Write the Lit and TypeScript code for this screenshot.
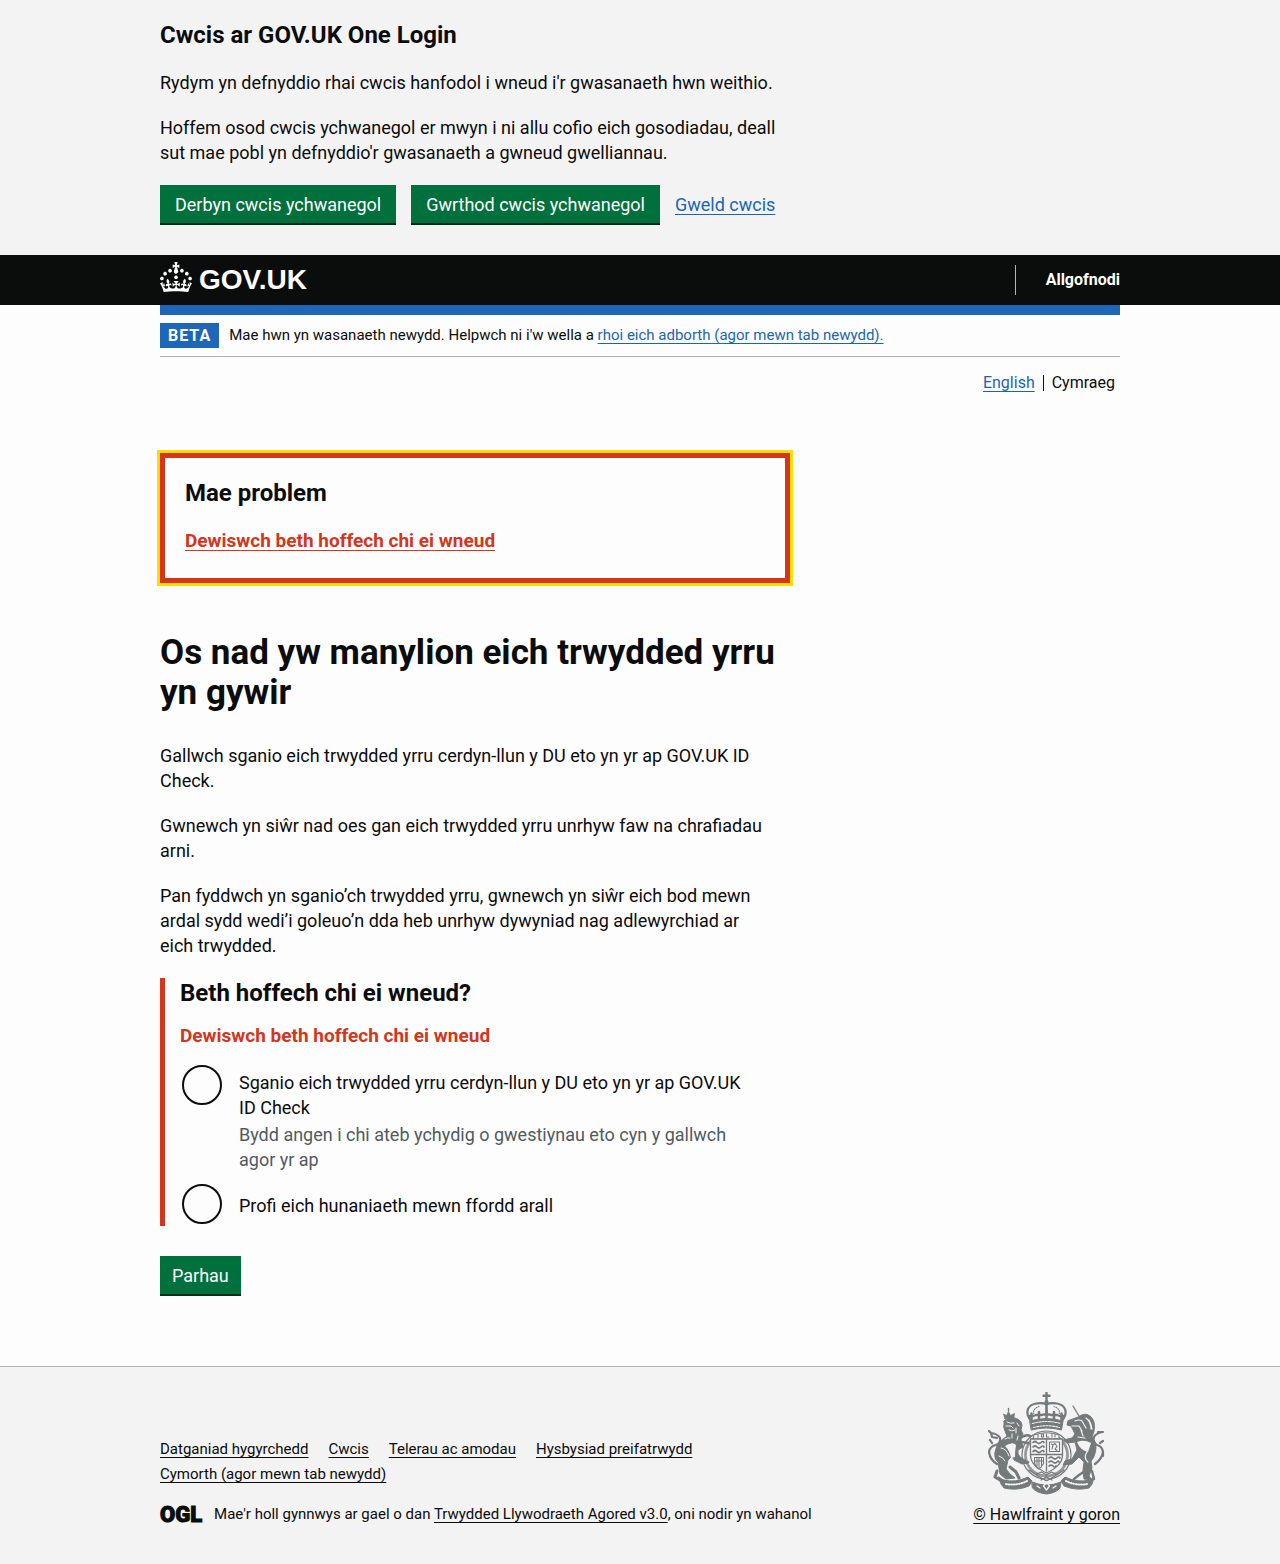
import { LitElement, html, css, svg } from "lit";
import { customElement, state } from "lit/decorators.js";

const crown = svg`<path fill="currentColor" d="M22.6 10.4c-1 .4-2-.1-2.4-1-.4-.9.1-2 1-2.4.9-.4 2 .1 2.4 1s-.1 2-1 2.4m-5.9 6.7c-.9.4-2-.1-2.4-1-.4-.9.1-2 1-2.4.9-.4 2 .1 2.4 1s-.1 2-1 2.4m10.8-3.7c-1 .4-2-.1-2.4-1-.4-.9.1-2 1-2.4.9-.4 2 .1 2.4 1s0 2-1 2.4m3.3 4.8c-1 .4-2-.1-2.4-1-.4-.9.1-2 1-2.4.9-.4 2 .1 2.4 1s-.1 2-1 2.4M17 4.7l2.3 1.2V2.5l-2.3.7-.2-.2.9-3h-3.4l.9 3-.2.2c-.1.1-2.3-.7-2.3-.7v3.4L15 4.7c.1.1.1.2.2.2l-1.3 4c-.1.2-.1.4-.1.6 0 1.1.8 2 1.9 2.2h.7c1-.2 1.9-1.1 1.9-2.1 0-.2 0-.4-.1-.6l-1.3-4c-.1-.2 0-.2.1-.3m-7.6 5.7c.9.4 2-.1 2.4-1 .4-.9-.1-2-1-2.4-.9-.4-2 .1-2.4 1s0 2 1 2.4m-5 3c.9.4 2-.1 2.4-1 .4-.9-.1-2-1-2.4-.9-.4-2 .1-2.4 1s.1 2 1 2.4m-3.2 4.8c.9.4 2-.1 2.4-1 .4-.9-.1-2-1-2.4-.9-.4-2 .1-2.4 1s0 2 1 2.4m14.8 11c4.4 0 8.6.3 12.3.8 1.1-4.5 2.4-7 3.7-8.8l-2.5-.9c.2 1.3.3 1.9 0 2.7-.4-.4-.8-1.1-1.1-2.3l-1.2 4c.7-.5 1.3-.8 2-.9-1.1 2.5-2.6 3.1-3.5 3-1.1-.2-1.7-1.2-1.5-2.1.3-1.2 1.5-1.5 2.1-.1 1.1-2.3-.8-3-2-2.3 1.9-1.9 2.1-3.5.6-5.6-2.1 1.6-2.1 3.2-1.2 5.5-1.2-1.4-3.2-.6-2.5 1.6.9-1.4 2.1-.5 1.9.8-.2 1.1-1.7 2.1-3.5 1.9-2.7-.2-2.9-2.1-2.9-3.6.7-.1 1.9.5 2.9 1.9l.4-4.3c-1.1 1.1-2.1 1.4-3.2 1.4.4-1.2 2.1-3 2.1-3h-5.4s1.7 1.9 2.1 3c-1.1 0-2.1-.2-3.2-1.4l.4 4.3c1-1.4 2.2-2 2.9-1.9-.1 1.5-.2 3.4-2.9 3.6-1.9.2-3.4-.8-3.5-1.9-.2-1.3 1-2.2 1.9-.8.7-2.3-1.2-3-2.5-1.6.9-2.2.9-3.9-1.2-5.5-1.5 2-1.3 3.7.6 5.6-1.2-.7-3.1 0-2 2.3.6-1.4 1.8-1.1 2.1.1.2.9-.3 1.9-1.5 2.1-.9.2-2.4-.5-3.5-3 .6 0 1.2.3 2 .9l-1.2-4c-.3 1.1-.7 1.9-1.1 2.3-.3-.8-.2-1.4 0-2.7l-2.9.9C1.3 23 2.6 25.5 3.7 30c3.7-.5 7.9-.8 12.3-.8"/>`;

const crest = svg`
  <g fill="none" stroke="#747a7a" stroke-linecap="round" stroke-linejoin="round">
    <!-- imperial crown -->
    <path d="M58.500 .8v8M55.500 3.800h6" stroke-width="2.400"/>
    <circle cx="58.500" cy="10" r="2" fill="#747a7a" stroke="none"/>
    <path d="M43 29C36 20 40 13 48 11.500q7-1 10.500 1 3.500-2 10.500-1c8 1.500 12 8.500 5 17.500" stroke-width="2.200"/>
    <path d="M47 24c-3-4-1-8 4-9.500M70 24c3-4 1-8-4-9.500" stroke-width="1.100" stroke-dasharray="1 1.400"/>
    <path d="M58.500 13v8" stroke-width="2.600"/>
    <path d="M42 29q16.500-5 33 0l-1.500 9q-15-4-30 0z" fill="#747a7a" stroke-width="1"/>
    <path d="M43.500 21.500v7M41.500 24h4M51 20v8M48 23h6M58.500 19v9M55.500 22.500h6M66 20v8M63 23h6M73.500 21.500v7M71.500 24h4" stroke-width="2.500"/>
    <path d="M44.500 31.500q14-4 28 0M45.500 35.500q13-3.500 26 0" stroke="#f3f3f3" stroke-width="1.100" stroke-dasharray="2 1.200"/>
    <!-- garter and quartered shield -->
    <ellipse cx="58.500" cy="63" rx="24.500" ry="24" stroke-width="1.200"/>
    <ellipse cx="58.500" cy="63" rx="21" ry="21" stroke-width="2.800" stroke-dasharray="1.500 1.300" opacity=".75"/>
    <path d="M46 43q12.500-4.500 25 0v4H46z" fill="#f3f3f3" stroke-width="1"/>
    <path d="M50 42.500v3M53.500 42v3h2v-3zM58.500 42v3h2.500M64 41.500v3.500M67 42.500v2.500" stroke-width="1.100"/>
    <path d="M42.500 47h32v16c0 9-8 14-16 18-8-4-16-9-16-18z" fill="#f3f3f3" stroke-width="1.300"/>
    <path d="M58.500 47v32M42.500 62.500h32" stroke-width="1.300"/>
    <path d="M45 50.500q2-2 4 0t4 0 3 0M45 55q2-2 4 0t4 0 3 0M45 59.500q2-2 4 0t4 0 3 0" stroke-width="1.700"/>
    <path d="M61.500 50h10v9.500h-10zM64 57l1-4 2-1.500 2 3-2 2.500 2 1.500M65 53l-1.500-1" stroke-width="1.100"/>
    <path d="M46.500 65.500h9v6q-2.500 4.500-5 5.500-4-3-4-8zM49 66v8M51 66v9M53.500 66v7M47 69h8" stroke-width="1.100"/>
    <path d="M61 66q2-2 4 0t4 0 3 0M61 70q2-2 4 0t4 0 2 0M61 74q2-2 4 0t3 0" stroke-width="1.700"/>
    <path d="M41 78l9 6 8.500 5 8.500-5 9-6M49 82l4.500-2 5 3 5-3 4.500 2M53 88l5.500-3 5.500 3" stroke-width="1.300"/>
    <!-- lion -->
    <path d="M17 26.500l-1.500-4.500 3 1.500 2-4 2 4 4-2-1 6q-4-2-8.500-1z" fill="#747a7a" stroke-width=".8"/>
    <path d="M20.500 16.500v2.500" stroke-width="1.400"/>
    <path d="M16 29q4-4 11-3 6 2 7 7l-1 5 2 4-2 6 2 7-5 3q-1 4 2 7l5 3 3 3-6 1-8-4-2-4-4 4-2 9 4 5 5 4-9 1-6-5-2-12q-4-3-3-10 1-7 7-12l5-4-2-5q-2-4-1-7z" fill="#747a7a" stroke-width="1"/>
    <path d="M19 30q3 2 7 1M18 34h5l2 2M21 38q3 2 6 0M29 31l2 3M28 36v5M24 42v4M30 44l-1 4M17 47q3-2 5-1M13 56q5 0 8 8M11 64q4 1 6 5" stroke="#f3f3f3" stroke-width="1"/>
    <path d="M17 54q8-5 11-1-1 5-1 12l-4 1q-1-7-6-12z" fill="#f3f3f3" stroke="none"/>
    <path d="M34 45q5-3 8-1M33 50l7 1M31 67q5 5 9 3" stroke-width="2.600"/>
    <path d="M9 72q-7-4-8-12 1-6 7-7 5-2 4-7-2-4-9-5M3 41l-2-2M3 41l1 4 5 1M4 51l-2-3M1 60l1 4" stroke-width="2.200"/>
    <path d="M9 79l-2 6 5 3 6 2M22 75l6 5 3 6" stroke-width="3"/>
    <!-- unicorn -->
    <path d="M91 24L85 14" stroke-width="1.300"/>
    <path d="M90 25q7-5 12-1 6 5 4 15l-2 6q4 4 4 11-1 9-5 13l1 7-3 8 3 4-8-1-1-9 1-8-5-5-7 7-9 1 2-4 7-2 5-9-2-8-8 1-4-3 9-2 3-4-4-8-4-1 1-4z" fill="#747a7a" stroke-width="1"/>
    <path d="M87 29q4-2 7 0l4 7M84 34l7 0 3 5M98 26q5 4 5 11M101 28q2 3 3 9M93 38l2 6M99 60q-4 6 1 10M90 45l7 1" stroke="#f3f3f3" stroke-width="1.200"/>
    <path d="M89 50q7-3 14 1l-3 9q-8-2-11-10z" fill="#f3f3f3" stroke="none"/>
    <path d="M107 72q7-5 8-12-1-6-6-7-5-3-3-8 2-4 9-5M115 40l-5 0M112 51l3-2M115 60l0 4" stroke-width="2.200"/>
    <path d="M97 79l-6 4-5 4M104 79l2 8" stroke-width="2.400"/>
    <!-- motto ribbon -->
    <path d="M11 85l4 3q13 3 25-3l4 4-3 5q-12 5-25 2l-3-4z" fill="#747a7a" stroke-width="1"/>
    <path d="M106 85l-4 3q-13 3-25-3l-4 4 3 5q12 5 25 2l3-4z" fill="#747a7a" stroke-width="1"/>
    <path d="M18 92q11 2 21-3M99 92q-11 2-21-3" stroke="#f3f3f3" stroke-width="2" stroke-dasharray=".8 1.800"/>
    <path d="M44 90q14 6 29 0l-1 6q-4 5-13.500 6-10-1-14-6z" fill="#747a7a" stroke-width="1"/>
    <path d="M58.500 90l3 4-3 4-3-4zM49 94l3 2M68 94l-3 2" stroke="#f3f3f3" stroke-width="1.300"/>
  </g>`;

const footerLinks = [
  "Datganiad hygyrchedd",
  "Cwcis",
  "Telerau ac amodau",
  "Hysbysiad preifatrwydd",
  "Cymorth (agor mewn tab newydd)",
];

@customElement("app-root")
export class AppRoot extends LitElement {
  @state() private choice = "";

  static styles = css`
    :host {
      display: flex;
      flex-direction: column;
      min-height: 100vh;
      background: #f3f3f3;
      color: #0b0c0c;
      font-family: Roboto, "Liberation Sans", sans-serif;
      font-size: 18px;
      line-height: 25px;
    }
    *, *::before { box-sizing: border-box; }
    h1, h2, p, ul, fieldset, legend { margin: 0; padding: 0; border: 0; }
    a {
      color: #1a65b3;
      text-decoration: underline;
      text-decoration-thickness: 1px;
      text-underline-offset: 3px;
    }
    .container { max-width: 960px; width: calc(100% - 60px); margin: 0 auto; }
    .column { max-width: 630px; }
    .heading-m { font-size: 24px; line-height: 30px; font-weight: 700; }

    .cookies { padding: 20px 0 30px; }
    .cookies p { margin-top: 20px; }
    .actions { display: flex; flex-wrap: wrap; align-items: baseline; gap: 15px; margin-top: 20px; }
    .button {
      font: inherit;
      line-height: 20px;
      color: #fff;
      background: #00703c;
      border: 0;
      border-bottom: 2px solid #002d18;
      border-radius: 0;
      padding: 10px 15px 8px;
      cursor: pointer;
    }
    .submit { padding-left: 12px; padding-right: 12px; }

    .header { background: #0b0c0c; color: #fff; }
    .header-row { display: flex; align-items: center; justify-content: space-between; min-height: 50px; }
    .brand {
      display: flex;
      align-items: center;
      gap: 7px;
      color: #fff;
      text-decoration: none;
      font: 700 28px/30px "Liberation Sans", sans-serif;
    }
    .brand svg { display: block; margin-bottom: 6px; }
    .signout { border-left: 1px solid #b1b4b6; padding-left: 30px; line-height: 30px; }
    .signout a { display: block; color: #fff; font-size: 16px; font-weight: 700; text-decoration: none; }
    .bar { height: 10px; background: #1d66b8; }

    .page { background: #fdfdfd; padding-bottom: 70px; }
    .phase {
      display: flex;
      align-items: center;
      gap: 10px;
      padding: 8px 0;
      border-bottom: 1px solid #b1b4b6;
      font-size: 15px;
    }
    .tag {
      background: #1d66b8;
      color: #fff;
      font-size: 16px;
      font-weight: 700;
      letter-spacing: 1px;
      padding: 0 8px;
    }
    .languages {
      display: flex;
      justify-content: flex-end;
      align-items: center;
      list-style: none;
      padding: 13px 5px 0 0;
      font-size: 16px;
    }
    .languages li { line-height: 16px; margin: 5px 0 4px; }
    .languages li + li { border-left: 1px solid #0b0c0c; margin-left: 8px; padding-left: 8px; }

    .summary {
      margin-top: 58px;
      padding: 20px 20px 25px;
      border: 5px solid #d4351c;
      outline: 3px solid #ffdd00;
    }
    .summary ul { list-style: none; margin-top: 20px; }
    .error { color: #d4351c; font-size: 19px; font-weight: 700; }
    h1 { margin-top: 50px; font-size: 35px; line-height: 40px; font-weight: 700; }
    .body { margin-top: 20px; max-width: 615px; }
    h1 + .body { margin-top: 30px; }

    .group { margin: 20px 0 30px; padding-left: 15px; border-left: 5px solid #d4351c; }
    .group .error { margin: 15px 0; }
    .option { display: flex; gap: 15px; }
    .option + .option { margin-top: 5px; }
    .option input {
      appearance: none;
      flex: none;
      width: 40px;
      height: 40px;
      margin: 2px;
      border: 2px solid #0b0c0c;
      border-radius: 50%;
      display: grid;
      place-items: center;
    }
    .option input:checked::before {
      content: "";
      width: 20px;
      height: 20px;
      border-radius: 50%;
      background: #0b0c0c;
    }
    .option-text { align-self: center; max-width: 515px; padding: 7px 0 5px; }
    .option-text label { display: block; }
    .hint { color: #505a5f; margin-top: 2px; }

    .footer { border-top: 1px solid #b1b4b6; padding: 25px 0 37px; font-size: 15px; }
    .footer a { color: #0b0c0c; }
    .footer-row { display: flex; align-items: flex-end; justify-content: space-between; gap: 30px; }
    .links { display: flex; flex-wrap: wrap; column-gap: 20px; list-style: none; max-width: 640px; margin-bottom: 15px; }
    .licence { display: flex; align-items: center; gap: 12px; }
    .ogl { font-size: 22px; font-weight: 900; -webkit-text-stroke: 1px #0b0c0c; }
    .crest { display: flex; flex-direction: column; align-items: center; gap: 7px; font-size: 16px; }
    .crest svg { display: block; }
  `;

  private option(id: string, label: string, hint = "") {
    return html`<div class="option">
      <input
        type="radio"
        name="action"
        id=${id}
        aria-describedby=${hint ? `${id}-hint` : "action-error"}
        .checked=${this.choice === id}
        @change=${() => (this.choice = id)}
      />
      <div class="option-text">
        <label for=${id}>${label}</label>
        ${hint ? html`<div class="hint" id="${id}-hint">${hint}</div>` : ""}
      </div>
    </div>`;
  }

  render() {
    return html`
      <section class="cookies" aria-labelledby="cookie-title">
        <div class="container">
          <div class="column">
            <h2 class="heading-m" id="cookie-title">Cwcis ar GOV.UK One Login</h2>
            <p>Rydym yn defnyddio rhai cwcis hanfodol i wneud i'r gwasanaeth hwn weithio.</p>
            <p>
              Hoffem osod cwcis ychwanegol er mwyn i ni allu cofio eich gosodiadau, deall sut mae
              pobl yn defnyddio'r gwasanaeth a gwneud gwelliannau.
            </p>
          </div>
          <div class="actions">
            <button class="button" type="button">Derbyn cwcis ychwanegol</button>
            <button class="button" type="button">Gwrthod cwcis ychwanegol</button>
            <a href="#cookies">Gweld cwcis</a>
          </div>
        </div>
      </section>

      <header class="header">
        <div class="container header-row">
          <a class="brand" href="#home">
            <svg width="32" height="30" viewBox="0 0 32 30" aria-hidden="true">${crown}</svg>
            <span>GOV.UK</span>
          </a>
          <nav class="signout"><a href="#sign-out">Allgofnodi</a></nav>
        </div>
      </header>

      <div class="page">
        <div class="container">
          <div class="bar"></div>
          <div class="phase">
            <strong class="tag">BETA</strong>
            <span>Mae hwn yn wasanaeth newydd. Helpwch ni i'w wella a
              <a href="#feedback">rhoi eich adborth (agor mewn tab newydd).</a></span>
          </div>
          <nav>
            <ul class="languages">
              <li><a href="#en">English</a></li>
              <li aria-current="true">Cymraeg</li>
            </ul>
          </nav>
          <main class="column">
            <div class="summary" role="alert" aria-labelledby="summary-title">
              <h2 class="heading-m" id="summary-title">Mae problem</h2>
              <ul>
                <li><a class="error" href="#scan">Dewiswch beth hoffech chi ei wneud</a></li>
              </ul>
            </div>
            <h1>Os nad yw manylion eich trwydded yrru yn gywir</h1>
            <p class="body">
              Gallwch sganio eich trwydded yrru cerdyn-llun y DU eto yn yr ap GOV.UK ID Check.
            </p>
            <p class="body">
              Gwnewch yn siŵr nad oes gan eich trwydded yrru unrhyw faw na chrafiadau arni.
            </p>
            <p class="body">
              Pan fyddwch yn sganio’ch trwydded yrru, gwnewch yn siŵr eich bod mewn ardal sydd
              wedi’i goleuo’n dda heb unrhyw dywyniad nag adlewyrchiad ar eich trwydded.
            </p>
            <form @submit=${(e: Event) => e.preventDefault()}>
              <div class="group">
                <fieldset aria-describedby="action-error">
                  <legend class="heading-m">Beth hoffech chi ei wneud?</legend>
                  <p class="error" id="action-error">Dewiswch beth hoffech chi ei wneud</p>
                  ${this.option(
                    "scan",
                    "Sganio eich trwydded yrru cerdyn-llun y DU eto yn yr ap GOV.UK ID Check",
                    "Bydd angen i chi ateb ychydig o gwestiynau eto cyn y gallwch agor yr ap",
                  )}
                  ${this.option("other", "Profi eich hunaniaeth mewn ffordd arall")}
                </fieldset>
              </div>
              <button class="button submit" type="submit">Parhau</button>
            </form>
          </main>
        </div>
      </div>

      <footer class="footer">
        <div class="container footer-row">
          <div>
            <ul class="links">
              ${footerLinks.map((text) => html`<li><a href="#footer">${text}</a></li>`)}
            </ul>
            <div class="licence">
              <span class="ogl">OGL</span>
              <span>Mae'r holl gynnwys ar gael o dan
                <a href="#licence">Trwydded Llywodraeth Agored v3.0</a>, oni nodir yn wahanol</span>
            </div>
          </div>
          <div class="crest">
            <svg width="117" height="103" viewBox="0 0 117 103" aria-hidden="true">${crest}</svg>
            <a href="#copyright">© Hawlfraint y goron</a>
          </div>
        </div>
      </footer>
    `;
  }
}
